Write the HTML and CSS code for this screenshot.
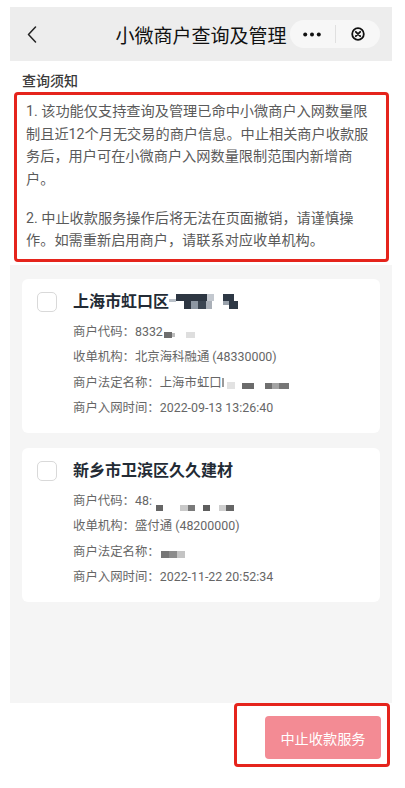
FILE: index.html
```html
<!DOCTYPE html>
<html>
<head>
    <meta charset="UTF-8">
    <meta name="viewport" content="width=device-width, initial-scale=1.0">
    <title>小微商户查询及管理</title>
    <link rel="stylesheet" href="styles.css">
</head>
<body>
    <div class="screen">
        <!-- 顶部导航 -->
        <div class="navbar">
            <span class="back">
                <svg width="10" height="17" viewBox="0 0 10 17"><path d="M8.5 1 L1.5 8.5 L8.5 16" fill="none" stroke="#222" stroke-width="1.5" stroke-linecap="round" stroke-linejoin="round"/></svg>
            </span>
            <div class="nav-title">小微商户查询及管理</div>
            <div class="capsule">
                <svg class="dots" width="18" height="5" viewBox="0 0 18 5"><circle cx="2.2" cy="2.5" r="2" fill="#111"/><circle cx="9" cy="2.5" r="2" fill="#111"/><circle cx="15.8" cy="2.5" r="2" fill="#111"/></svg>
                <span class="sep"></span>
                <svg class="close" width="14" height="14" viewBox="0 0 14 14"><circle cx="7" cy="7" r="5.8" fill="none" stroke="#111" stroke-width="1.8"/><path d="M4.8 4.8 L9.2 9.2 M9.2 4.8 L4.8 9.2" stroke="#111" stroke-width="1.8" stroke-linecap="round"/></svg>
            </div>
        </div>

        <!-- 查询须知 -->
        <div class="notice">
            <div class="notice-title">查询须知</div>
            <div class="notice-box">
                <p>1. 该功能仅支持查询及管理已命中小微商户入网数量限制且近12个月无交易的商户信息。中止相关商户收款服务后，用户可在小微商户入网数量限制范围内新增商户。</p>
                <p>2. 中止收款服务操作后将无法在页面撤销，请谨慎操作。如需重新启用商户，请联系对应收单机构。</p>
            </div>
        </div>

        <!-- 商户列表 -->
        <div class="list">
            <div class="card">
                <span class="checkbox"></span>
                <div class="card-body">
                    <div class="card-title">上海市虹口区<svg class="mosaic mosaic-title" width="74" height="18" viewBox="0 0 74 18"><rect x="0" y="6" width="7" height="3" fill="#b9c0c8"/><rect x="7" y="1" width="31" height="7" fill="#2d3642"/><rect x="38" y="1" width="7" height="7" fill="#c3c8cf"/><rect x="15" y="8" width="7" height="8" fill="#2d3642"/><rect x="22" y="8" width="7" height="8" fill="#8c96a2"/><rect x="29" y="8" width="8" height="8" fill="#3b4551"/><rect x="37" y="8" width="6" height="8" fill="#aab0b8"/><rect x="54" y="1" width="11" height="7" fill="#2e3845"/><rect x="60" y="8" width="9" height="8" fill="#2e3845"/><rect x="54" y="8" width="6" height="4" fill="#9aa2ac"/></svg></div>
                    <div class="card-info">
                        <div>商户代码：8332<svg class="mosaic" width="34" height="14" viewBox="0 0 34 14"><rect x="1" y="7" width="8" height="6" fill="#6e6e6e"/><rect x="9" y="8" width="3" height="4" fill="#bdbdbd"/><rect x="23" y="7" width="9" height="6" fill="#dedede"/></svg></div>
                        <div>收单机构：北京海科融通 (48330000)</div>
                        <div>商户法定名称：上海市虹口<svg class="mosaic" width="70" height="14" viewBox="0 0 70 14"><rect x="0" y="2" width="2" height="9" fill="#9a9a9a"/><rect x="5" y="6" width="8" height="7" fill="#e2e2e2"/><rect x="20" y="7" width="12" height="6" fill="#6b6b6b"/><rect x="43" y="7" width="7" height="6" fill="#6f6f6f"/><rect x="50" y="7" width="7" height="6" fill="#a3a3a3"/><rect x="57" y="7" width="10" height="6" fill="#777"/></svg></div>
                        <div>商户入网时间：2022-09-13 13:26:40</div>
                    </div>
                </div>
            </div>
            <div class="card">
                <span class="checkbox"></span>
                <div class="card-body">
                    <div class="card-title">新乡市卫滨区久久建材</div>
                    <div class="card-info">
                        <div>商户代码：48:<svg class="mosaic mosaic-low" width="86" height="18" viewBox="0 0 86 18"><rect x="4" y="11" width="7" height="6" fill="#666"/><rect x="28" y="11" width="8" height="6" fill="#c9c9c9"/><rect x="36" y="11" width="7" height="6" fill="#7a7a7a"/><rect x="51" y="11" width="7" height="6" fill="#5e5e5e"/><rect x="67" y="11" width="7" height="6" fill="#cfcfcf"/><rect x="74" y="11" width="8" height="6" fill="#666"/></svg></div>
                        <div>收单机构：盛付通 (48200000)</div>
                        <div>商户法定名称：<svg class="mosaic" width="26" height="14" viewBox="0 0 26 14"><rect x="1" y="6" width="8" height="7" fill="#777"/><rect x="9" y="6" width="8" height="7" fill="#8c8c8c"/><rect x="17" y="6" width="8" height="7" fill="#c4c4c4"/></svg></div>
                        <div>商户入网时间：2022-11-22 20:52:34</div>
                    </div>
                </div>
            </div>
        </div>

        <!-- 底部操作 -->
        <div class="footer">
            <div class="mark">
                <button class="stop-btn">中止收款服务</button>
            </div>
        </div>
    </div>
</body>
</html>
```

FILE: styles.css
```css
* {
    box-sizing: border-box;
}
body {
    margin: 0;
    background: #fff;
    font-family: Roboto, "Noto Sans CJK SC", sans-serif;
}
.screen {
    height: 788px;
    margin: 0 13px 0 10px;
    padding-top: 7px;
    display: flex;
    flex-direction: column;
}
.navbar {
    height: 54px;
    flex-shrink: 0;
    background: #ededed;
    display: grid;
    grid-template-columns: 1fr auto 1fr;
    align-items: center;
}
.back {
    padding-left: 17px;
    display: flex;
    align-items: center;
}
.nav-title {
    font-size: 19px;
    color: #111;
    white-space: nowrap;
}
.capsule {
    justify-self: end;
    margin-right: 12px;
    width: 90px;
    height: 28px;
    border-radius: 14px;
    background: #f7f7f7;
    display: flex;
    align-items: center;
    padding-left: 13px;
}
.sep {
    width: 1px;
    height: 18px;
    background: #e0e0e0;
    margin: 0 15px 0 14px;
}
.notice {
    padding: 10px 3px 3px 4px;
    flex-shrink: 0;
}
.notice-title {
    font-size: 14px;
    font-weight: 500;
    color: #3a3a3a;
    line-height: 20px;
    padding-left: 8px;
    margin-bottom: 1px;
}
.notice-box {
    border: 3px solid #e5241c;
    border-radius: 4px;
    padding: 5px 10px 7px 9px;
    font-size: 14.2px;
    line-height: 22.5px;
    color: #5a5a5a;
}
.notice-box p {
    margin: 0;
}
.notice-box p + p {
    margin-top: 16.5px;
}
.list {
    flex: 1;
    background: #f5f5f5;
    padding: 14px 12px;
    display: flex;
    flex-direction: column;
    gap: 15px;
}
.card {
    background: #fff;
    border-radius: 6px;
    padding: 11px 15px 12px;
    display: flex;
    gap: 16px;
}
.checkbox {
    width: 20px;
    height: 20px;
    flex-shrink: 0;
    margin-top: 2px;
    border: 1px solid #d9d9d9;
    border-radius: 5px;
}
.card-title {
    font-size: 16px;
    font-weight: 700;
    line-height: 24px;
    color: #232b35;
    white-space: nowrap;
}
.card-info {
    margin-top: 5px;
    font-size: 12.4px;
    line-height: 25.5px;
    color: #666;
    white-space: nowrap;
}
.mosaic {
    vertical-align: -3px;
}
.mosaic-title {
    vertical-align: -4px;
}
.mosaic-low {
    vertical-align: -7px;
}
.footer {
    height: 85px;
    flex-shrink: 0;
    display: flex;
    justify-content: flex-end;
    align-items: flex-start;
    padding-right: 2px;
}
.mark {
    border: 3px solid #e5241c;
    border-radius: 4px;
    padding: 10px 6px 5px 28px;
}
.stop-btn {
    width: 116px;
    height: 43px;
    border: none;
    border-radius: 4px;
    background: #f38b94;
    color: #fff;
    font-family: inherit;
    font-size: 14.2px;
    cursor: pointer;
}
```
